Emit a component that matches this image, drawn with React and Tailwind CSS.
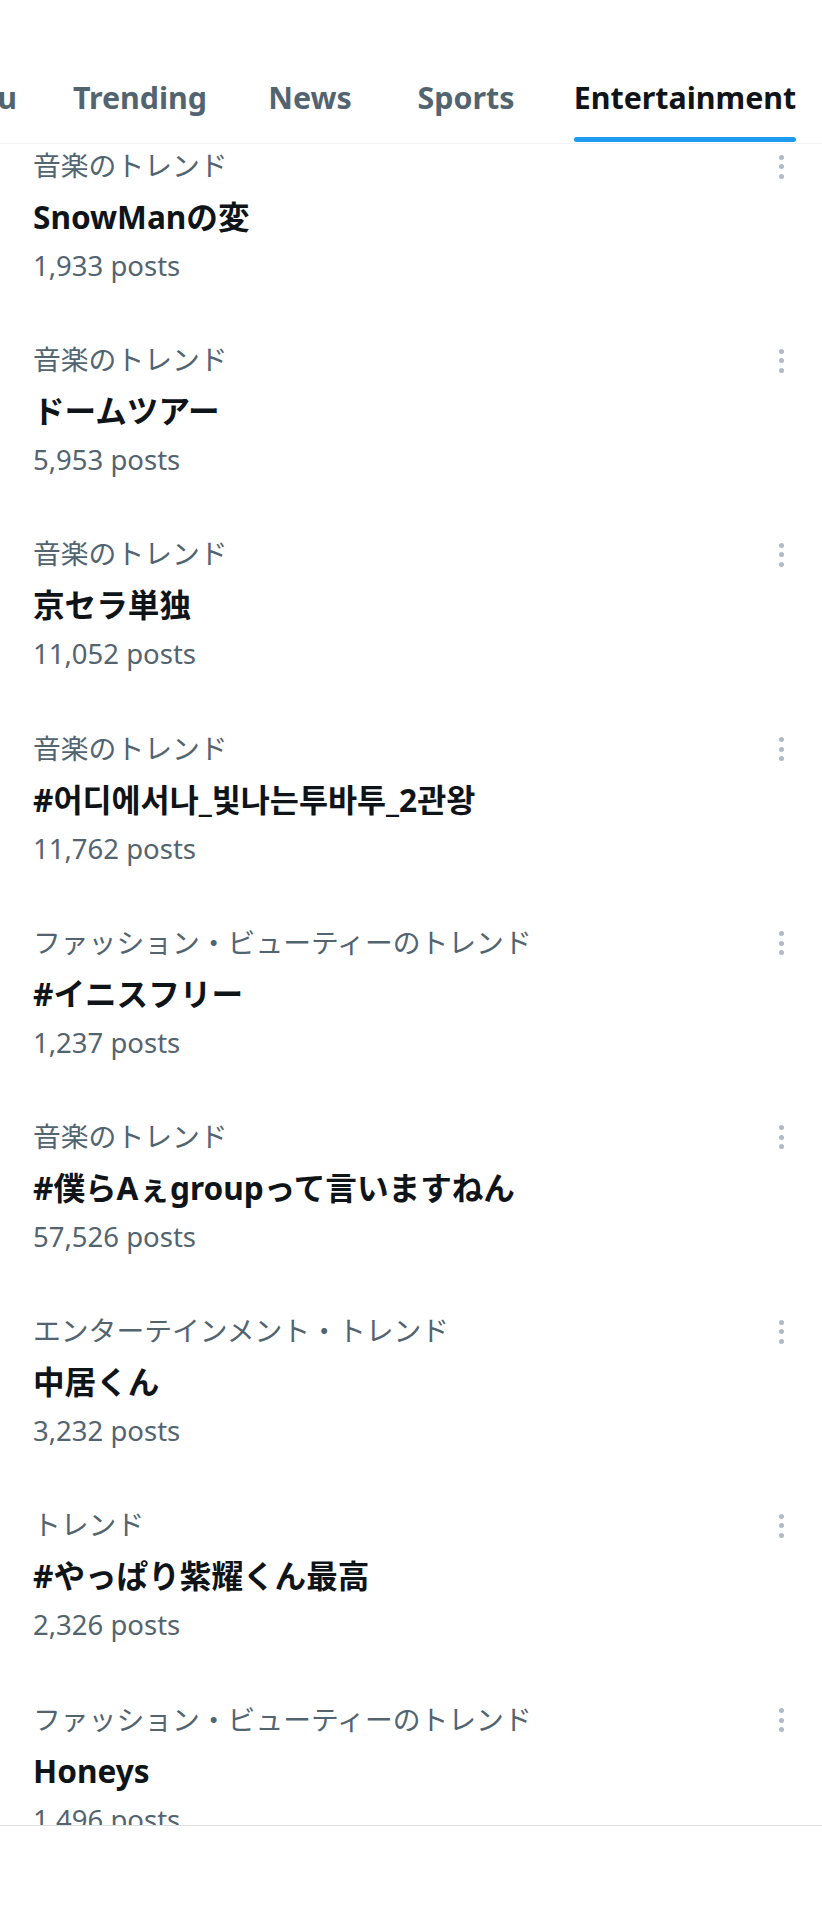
import React from 'react';

const tabs = [
  { label: 'For you', w: 'w-[44px]' },
  { label: 'Trending', w: 'w-[192px]' },
  { label: 'News', w: 'w-[148px]' },
  { label: 'Sports', w: 'w-[164px]' },
  { label: 'Entertainment', w: 'w-[274px]', active: true },
];

const trends = [
  { cat: '音楽のトレンド', title: 'SnowManの変', posts: '1,933 posts' },
  { cat: '音楽のトレンド', title: 'ドームツアー', posts: '5,953 posts' },
  { cat: '音楽のトレンド', title: '京セラ単独', posts: '11,052 posts' },
  { cat: '音楽のトレンド', title: '#어디에서나_빛나는투바투_2관왕', posts: '11,762 posts' },
  { cat: 'ファッション・ビューティーのトレンド', title: '#イニスフリー', posts: '1,237 posts' },
  { cat: '音楽のトレンド', title: '#僕らAぇgroupって言いますねん', posts: '57,526 posts' },
  { cat: 'エンターテインメント・トレンド', title: '中居くん', posts: '3,232 posts' },
  { cat: 'トレンド', title: '#やっぱり紫耀くん最高', posts: '2,326 posts' },
  { cat: 'ファッション・ビューティーのトレンド', title: 'Honeys', posts: '1,496 posts' },
];

const font = { fontFamily: '"Noto Sans", "Noto Sans CJK JP", "Noto Sans CJK KR", sans-serif' };

const TrendItem = ({ trend }) => (
  <div className="h-[194.2px] shrink-0 flex justify-between pl-[33px] pr-[38px]">
    <div className="flex flex-col pt-[4px]">
      <div className="h-[34px] leading-[34px] text-[27.8px] text-[#536471] whitespace-nowrap">{trend.cat}</div>
      <div className="mt-[15px] h-[40px] leading-[40px] text-[31.6px] font-bold text-[#0f1419] whitespace-nowrap">
        {trend.title}
      </div>
      <div className="mt-[12px] h-[34px] leading-[34px] text-[27.5px] text-[#536471] whitespace-nowrap">{trend.posts}</div>
    </div>
    <div className="flex flex-col gap-[4.5px] pt-[10.5px]">
      <span className="w-[5px] h-[5px] rounded-full bg-[#aebbc4]" />
      <span className="w-[5px] h-[5px] rounded-full bg-[#aebbc4]" />
      <span className="w-[5px] h-[5px] rounded-full bg-[#aebbc4]" />
    </div>
  </div>
);

export default function App() {
  return (
    <div className="w-[822px] h-[1920px] bg-white overflow-hidden flex flex-col" style={font}>
      <div className="h-[144px] shrink-0 border-b border-[#eff3f4] flex items-end">
        {tabs.map((tab, i) => (
          <div
            key={tab.label}
            className={`${tab.w} shrink-0 flex flex-col ${i === 0 ? 'items-end pr-[27px]' : 'items-center'}`}
          >
            <div className="flex flex-col items-stretch">
              <span
                className={`h-[40px] leading-[40px] text-[30.4px] font-bold whitespace-nowrap ${
                  tab.active ? 'text-[#0f1419]' : 'text-[#536471]'
                }`}
              >
                {tab.label}
              </span>
              <div
                className={`mt-[19px] h-[5px] mb-[1px] rounded-full ${tab.active ? 'bg-[#1d9bf0]' : 'bg-transparent'}`}
              />
            </div>
          </div>
        ))}
      </div>

      <div className="h-[1681px] shrink-0 overflow-hidden flex flex-col">
        {trends.map((t, i) => (
          <TrendItem key={i} trend={t} />
        ))}
      </div>

      <div className="flex-1 border-t border-[#dde1e3] bg-white" />
    </div>
  );
}
